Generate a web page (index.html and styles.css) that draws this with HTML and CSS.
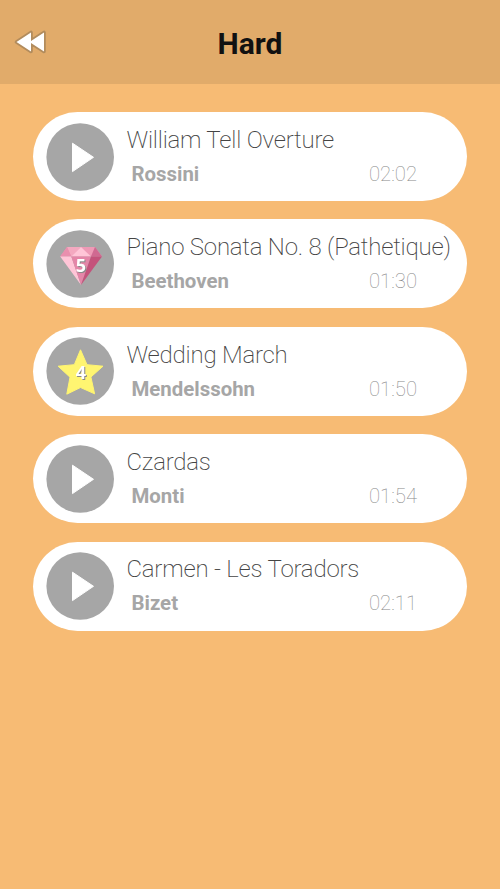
FILE: index.html
```html
<!DOCTYPE html>
<html lang="en">
<head>
<meta charset="utf-8">
<title>Hard</title>
<link rel="stylesheet" href="styles.css">
</head>
<body>
<header class="bar">
  <svg class="back" viewBox="0 0 40 30" role="img" aria-label="Back"><path d="M6.500 15 21 5.500V14L34 5.500V24.500L21 16V24.500Z"/></svg>
  <h1 class="heading">Hard</h1>
</header>
<main class="list">
  <article class="card">
    <svg class="badge" viewBox="0 0 68 68"><circle class="disc" cx="34.200" cy="34" r="33.800"/><path class="play" d="M26.500 20.200 47.500 34.300 26.500 48.600Z"/></svg>
    <div class="info"><h2 class="title">William Tell Overture</h2><div class="meta"><span class="composer">Rossini</span><span class="time">02:02</span></div></div>
  </article>
  <article class="card">
    <svg class="badge" viewBox="0 0 68 68"><circle class="disc" cx="34.200" cy="34" r="33.800"/>
      <path fill="#e994b2" d="M21 17H49L56 26.500H14.200Z"/>
      <path fill="#f4a9c0" d="M21 17H35L25.300 26.500Z"/>
      <path fill="#ee9ab6" d="M35 17H49L45 26.500Z"/>
      <path fill="#ffc5d7" d="M35 17 45 26.500H25.300Z"/>
      <path fill="#e98fae" d="M21 17 25.300 26.500H14.200Z"/>
      <path fill="#d06991" d="M49 17 56 26.500H45Z"/>
      <path fill="#ffc5d7" d="M14.200 26.500H25.300L35 55Z"/>
      <path fill="#e486a8" d="M25.300 26.500H45L35 55Z"/>
      <path fill="#c4527b" d="M45 26.500H56L35 55Z"/>
      <text class="count" x="34.800" y="42">5</text></svg>
    <div class="info"><h2 class="title">Piano Sonata No. 8 (Pathetique)</h2><div class="meta"><span class="composer">Beethoven</span><span class="time">01:30</span></div></div>
  </article>
  <article class="card">
    <svg class="badge" viewBox="0 0 68 68"><circle class="disc" cx="34.200" cy="34" r="33.800"/>
      <path class="star" d="M34.500 12.800 41 27.700 57 29.200 44.900 40 48.600 56.800 34.500 50.500 20.800 57.200 24 40.200 12.100 29.200 28.300 27.700Z"/>
      <text class="count" x="34.800" y="42">4</text></svg>
    <div class="info"><h2 class="title">Wedding March</h2><div class="meta"><span class="composer">Mendelssohn</span><span class="time">01:50</span></div></div>
  </article>
  <article class="card">
    <svg class="badge" viewBox="0 0 68 68"><circle class="disc" cx="34.200" cy="34" r="33.800"/><path class="play" d="M26.500 20.200 47.500 34.300 26.500 48.600Z"/></svg>
    <div class="info"><h2 class="title">Czardas</h2><div class="meta"><span class="composer">Monti</span><span class="time">01:54</span></div></div>
  </article>
  <article class="card">
    <svg class="badge" viewBox="0 0 68 68"><circle class="disc" cx="34.200" cy="34" r="33.800"/><path class="play" d="M26.500 20.200 47.500 34.300 26.500 48.600Z"/></svg>
    <div class="info"><h2 class="title">Carmen - Les Toradors</h2><div class="meta"><span class="composer">Bizet</span><span class="time">02:11</span></div></div>
  </article>
</main>
</body>
</html>
```
FILE: styles.css
```css
* { box-sizing: border-box; }
body {
  margin: 0;
  min-height: 889px;
  background: #f7bb74;
  font-family: Roboto, "Liberation Sans", sans-serif;
}
.bar {
  display: grid;
  grid-template-columns: 50px 1fr 50px;
  align-items: center;
  height: 84px;
  padding: 4px 10px 0;
  background: #e1ab6a;
}
.back { width: 40px; height: 30px; margin-top: -4px; }
.back path {
  fill: #fff;
  stroke: #b28c5d;
  stroke-width: 3.6;
  stroke-linejoin: round;
  paint-order: stroke;
}
.heading {
  margin: 0;
  text-align: center;
  font-size: 30px;
  font-weight: 700;
  line-height: 36px;
  color: #111;
}
.list {
  display: flex;
  flex-direction: column;
  gap: 18.4px;
  padding: 28px 33px 0 32.5px;
}
.card {
  display: flex;
  align-items: center;
  height: 89px;
  padding-left: 13.5px;
  border-radius: 44.5px;
  background: #fff;
}
.badge { flex: none; width: 68px; height: 68px; }
.disc { fill: #a6a6a6; }
.play { fill: #fff; stroke: #fff; stroke-width: 1; stroke-linejoin: round; }
.star { fill: #fff571; stroke: #fff571; stroke-width: 1; stroke-linejoin: round; }
.count {
  fill: #fff;
  font: 700 18px "Open Sans", sans-serif;
  text-anchor: middle;
  filter: drop-shadow(1px 1px 0.5px #888);
}
.info { flex: 1; min-width: 0; padding: 0.6px 0 0 12.5px; }
.title {
  margin: 0;
  white-space: nowrap;
  font-size: 24px;
  font-weight: 200;
  letter-spacing: -0.22px;
  line-height: 34px;
  color: #444;
}
.meta {
  display: flex;
  justify-content: space-between;
  padding: 0 50px 0 5px;
  line-height: 34px;
}
.composer { font-size: 20.4px; font-weight: 700; color: #a6a6a6; }
.time { font-size: 20.3px; font-weight: 100; color: #888; }
```
